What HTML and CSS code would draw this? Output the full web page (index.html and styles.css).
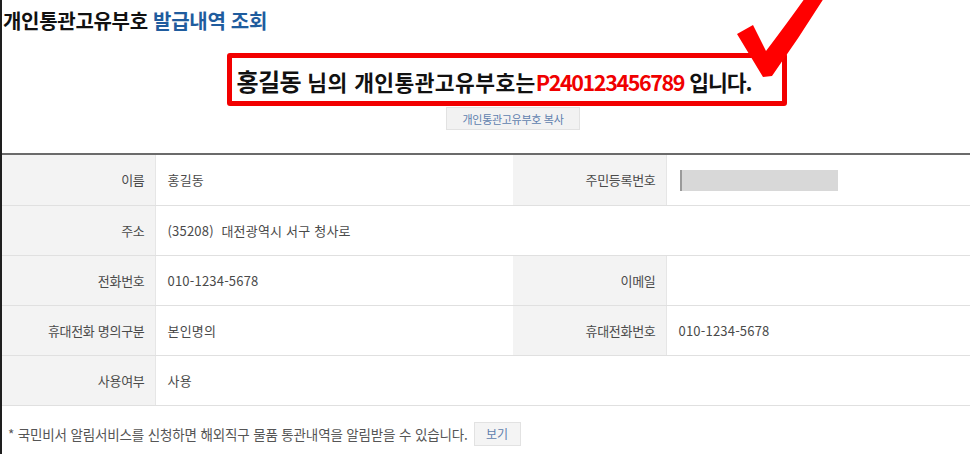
FILE: index.html
```html
<!DOCTYPE html>
<html lang="ko">
<head>
<meta charset="utf-8">
<link rel="stylesheet" href="styles.css">
</head>
<body>
<div class="page">
  <h1 class="title">개인통관고유부호 <span class="blue">발급내역 조회</span></h1>
  <div class="result">
    <div class="redbox">
      <p class="msg"><span class="name">홍길동</span> 님의 개인통관고유부호는<span class="code">P240123456789</span><span class="end"> 입니다.</span></p>
    </div>
    <svg class="check" width="130" height="90" viewBox="0 0 130 90">
      <path d="M35 34 L51 25 L64 51 Q86 22 103 -2 L122 -2 Q97 38 70 76 L61 77 Z" fill="#f00"/>
    </svg>
    <button class="copy">개인통관고유부호 복사</button>
  </div>
  <table class="info">
    <colgroup>
      <col class="c1"><col class="c2"><col class="c3"><col class="c4">
    </colgroup>
    <tr>
      <th>이름</th><td>홍길동</td>
      <th>주민등록번호</th><td><span class="mask"></span></td>
    </tr>
    <tr>
      <th>주소</th><td colspan="3">(35208)&nbsp; 대전광역시 서구 청사로</td>
    </tr>
    <tr>
      <th>전화번호</th><td>010-1234-5678</td>
      <th>이메일</th><td></td>
    </tr>
    <tr>
      <th>휴대전화 명의구분</th><td>본인명의</td>
      <th>휴대전화번호</th><td>010-1234-5678</td>
    </tr>
    <tr>
      <th>사용여부</th><td colspan="3">사용</td>
    </tr>
  </table>
  <div class="note">
    <span>* 국민비서 알림서비스를 신청하면 해외직구 물품 통관내역을 알림받을 수 있습니다.</span>
    <button class="view">보기</button>
  </div>
</div>
</body>
</html>
```

FILE: styles.css
```css
* { box-sizing: border-box; }
html, body { margin: 0; padding: 0; background: #fff; }
body {
  font-family: "Noto Sans CJK KR", "Noto Sans", sans-serif;
  width: 970px;
  height: 454px;
  overflow: hidden;
}
.page {
  border-left: 2px solid #1e1e1e;
  height: 454px;
}
.title {
  margin: 0;
  padding: 6px 0 0 1px;
  font-size: 20px;
  line-height: 30px;
  font-weight: 700;
  color: #111;
  letter-spacing: -0.3px;
}
.blue { color: #1f5c9e; }
.result {
  position: relative;
  display: flex;
  flex-direction: column;
  align-items: center;
  padding-top: 17px;
  height: 117px;
}
.redbox {
  margin-left: 42px;
  width: 560px;
  height: 53px;
  border: 5px solid #f20000;
  border-radius: 3px;
  display: flex;
  align-items: center;
  justify-content: center;
}
.msg {
  margin: 0;
  font-size: 21.5px;
  line-height: 28px;
  font-weight: 700;
  color: #111;
  letter-spacing: 0.4px;
  white-space: nowrap;
  margin-left: -26px;
  padding-top: 3px;
}
.msg .name { font-size: 24px; letter-spacing: -0.6px; }
.msg .code { color: #f00000; letter-spacing: -1.4px; }
.msg .end { letter-spacing: -1px; }
.check {
  position: absolute;
  left: 700px;
  top: -36px;
  overflow: visible;
}
.copy {
  margin: 1px 0 0 54px;
  width: 134px;
  height: 23px;
  border: 1px solid #e2e2e2;
  background: #f2f2f2;
  color: #5f7fae;
  font-family: inherit;
  font-size: 11px;
  padding: 0;
  letter-spacing: -0.3px;
}
.info {
  width: 968px;
  border-collapse: collapse;
  table-layout: fixed;
  border-top: 2px solid #6b6b6b;
}
.c1 { width: 153px; }
.c2 { width: 358px; }
.c3 { width: 153px; }
.c4 { width: 304px; }
.info th, .info td {
  height: 50px;
  border-bottom: 1px solid #e0e0e0;
  font-size: 13px;
  font-weight: 400;
  color: #4a4a4a;
  padding: 0;
}
.info tr:first-child th, .info tr:first-child td { height: 51px; }
.info th {
  background: #f3f3f3;
  text-align: right;
  padding-right: 10px;
  border-right: 1px solid #e6e6e6;
  letter-spacing: -0.3px;
}
.info td {
  text-align: left;
  padding-left: 12px;
  letter-spacing: 0.2px;
}
.mask {
  display: inline-block;
  width: 158px;
  height: 21px;
  background: #d8d8d8;
  vertical-align: middle;
  border-left: 2px solid #9a9a9a;
  margin-left: 1px;
}
.note {
  display: flex;
  align-items: center;
  gap: 6px;
  padding: 16px 0 0 6px;
  font-size: 13.5px;
  color: #555;
  letter-spacing: -0.15px;
}
.view {
  width: 47px;
  height: 24px;
  border: 1px solid #e2e2e2;
  background: #f4f4f4;
  color: #5f7fae;
  font-family: inherit;
  font-size: 12px;
  padding: 0;
}
```
